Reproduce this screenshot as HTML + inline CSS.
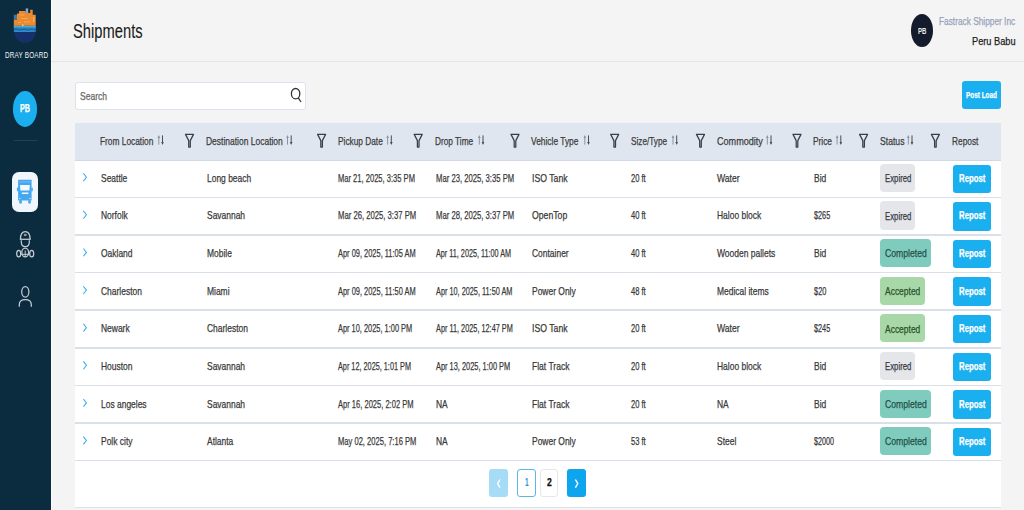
<!DOCTYPE html><html><head><meta charset="utf-8"><style>
html,body{margin:0;padding:0;}
body{width:1024px;height:510px;overflow:hidden;position:relative;background:#f4f4f4;font-family:"Liberation Sans",sans-serif;}
.t{position:absolute;white-space:nowrap;line-height:normal;transform-origin:0 0;-webkit-text-stroke:0.25px currentColor;}
.a{position:absolute;}
svg{position:absolute;overflow:visible;}
</style></head><body><div class="a" style="left:0px;top:0px;width:51px;height:510px;background:#0b2b3f;"></div>
<div class="a" style="left:51px;top:0px;width:1.2000000000000028px;height:510px;background:#fbfbfb;"></div>
<svg style="left:0;top:0" width="51" height="64" viewBox="0 0 51 64">
<path d="M14.2 31.8 H35.7 C35.7 38.2 31 42.8 24.95 42.8 C18.9 42.8 14.2 38.2 14.2 31.8 Z" fill="#15306a"/>
<rect x="13.8" y="25.6" width="22" height="6.4" fill="#2a7fbe"/>
<rect x="13.8" y="25.8" width="22" height="1.6" fill="#45aee0"/>
<path d="M14 29.6 Q16 28.6 18 29.6 T22 29.6 T26 29.6 T30 29.6 T34 29.6 T36 29.6" fill="none" stroke="#1c5e9c" stroke-width="1"/>
<path d="M14 31.2 Q16 30.4 18 31.2 T22 31.2 T26 31.2 T30 31.2 T34 31.2" fill="none" stroke="#3b9bd2" stroke-width="0.7"/>
<path d="M13.8 25.8 V19.5 H17 V13.5 H19 V11 H25.7 V13 H30.2 V9.8 H32.7 V14.7 H35.7 V25.8 Z" fill="#ec8a30"/>
<rect x="13.8" y="14.7" width="3.2" height="5" fill="#3a78ac"/>
<rect x="25.7" y="8.4" width="2.5" height="4.6" fill="#8aa6c6"/>
<g fill="#f7b872" opacity=".75"><rect x="19.5" y="14.5" width="5" height="0.9"/><rect x="21" y="18" width="7" height="0.9"/><rect x="24" y="21.5" width="6" height="0.9"/><rect x="33" y="17" width="1.5" height="5"/><rect x="18" y="22" width="3" height="0.9"/></g>
<rect x="22" y="24.6" width="1.5" height="1.2" fill="#ffe1a0"/>
</svg>
<div class="t" style="left:4.60px;top:49.23px;font-size:9.8px;color:#f2f4f6;font-weight:normal;transform:scaleX(0.6479);letter-spacing:0.3px;-webkit-text-stroke:0;">DRAY BOARD</div>
<div class="a" style="left:13px;top:91px;width:24.299999999999997px;height:35.599999999999994px;background:#1ab0ef;border-radius:50%;"></div>
<div class="t" style="left:20.20px;top:102.98px;font-size:10.3px;color:#ffffff;font-weight:bold;transform:scaleX(0.6991);">PB</div>
<div class="a" style="left:14px;top:139.5px;width:23px;height:1.0px;background:#23405a;"></div>
<div class="a" style="left:12px;top:172px;width:26.299999999999997px;height:39.599999999999994px;background:#f0f6fb;border-radius:7px;"></div>
<svg style="left:0;top:0" width="51" height="320" viewBox="0 0 51 320">
<g fill="#45a8ee">
<rect x="18.1" y="179.8" width="13.5" height="20.8" rx="0.5"/>
<rect x="16.9" y="187.4" width="1.6" height="3.9" rx="0.6"/>
<rect x="31.2" y="187.4" width="1.6" height="3.9" rx="0.6"/>
<rect x="19.2" y="200" width="2.7" height="3.7" rx="1.1"/>
<rect x="28.2" y="200" width="2.7" height="3.7" rx="1.1"/>
</g>
<g fill="#f4f9fd">
<path d="M20 185.1 H29.8 L29.4 190.4 H20.4 Z"/>
<rect x="21.9" y="192.5" width="6.5" height="1.5"/>
<rect x="19.2" y="181.6" width="11.3" height="0.6" opacity=".45"/>
<rect x="19" y="197.9" width="1.6" height="1.2" opacity=".6"/>
<rect x="29.1" y="197.9" width="1.6" height="1.2" opacity=".6"/>
</g>
<g fill="none" stroke="#c5cbd1" stroke-width="1.25">
<path d="M20.5 239 C20.5 233.6 22.5 231.6 25.3 231.6 C28.1 231.6 30 233.6 30 239"/>
<path d="M19.8 239.3 H30.8"/>
<ellipse cx="25.3" cy="234.9" rx="1.2" ry="0.7" stroke-width="0.9"/>
<path d="M21.3 240.2 V242 C21.3 245 23 246.7 25.3 246.7 C27.6 246.7 29.3 245 29.3 242 V240.2"/>
<ellipse cx="25.2" cy="252.5" rx="3.4" ry="4.4"/>
<path d="M25.2 250.5 V256.8 M20.7 254.3 H29.7" stroke-width="1"/>
<ellipse cx="18.7" cy="253.6" rx="2" ry="3.3"/>
<ellipse cx="31.7" cy="253.6" rx="2" ry="3.3"/>
<ellipse cx="25.3" cy="291.8" rx="3.6" ry="5.3"/>
<path d="M19.3 306.7 V304.5 C19.3 301 21.5 299.5 25.3 299.5 C29.1 299.5 31.3 301 31.3 304.5 V306.7"/>
</g>
</svg>
<div class="a" style="left:51px;top:61px;width:973px;height:1px;background:#e6e6e6;"></div>
<div class="t" style="left:73.10px;top:20.63px;font-size:19.3px;color:#1b1b1b;font-weight:normal;transform:scaleX(0.7640);-webkit-text-stroke:0.1px currentColor;">Shipments</div>
<div class="a" style="left:911px;top:14px;width:22px;height:33px;background:#131b2d;border-radius:50%;"></div>
<div class="t" style="left:917.80px;top:24.61px;font-size:9.6px;color:#ececec;font-weight:bold;transform:scaleX(0.6303);-webkit-text-stroke:0;">PB</div>
<div class="t" style="left:939.10px;top:14.92px;font-size:10.7px;color:#97a3ba;font-weight:normal;transform:scaleX(0.7775);">Fastrack Shipper Inc</div>
<div class="t" style="left:971.60px;top:33.60px;font-size:11.6px;color:#1c1c1c;font-weight:normal;transform:scaleX(0.7958);">Peru Babu</div>
<div class="a" style="left:74.5px;top:81.5px;width:231.5px;height:28.200000000000003px;background:#fff;border:1px solid #dde3ec;border-radius:3px;box-sizing:border-box;"></div>
<div class="t" style="left:80.30px;top:90.05px;font-size:11px;color:#666;font-weight:normal;transform:scaleX(0.7747);">Search</div>
<svg style="left:0;top:0" width="320" height="120" viewBox="0 0 320 120"><g fill="none" stroke="#333" stroke-width="1.3">
<ellipse cx="295.6" cy="93.7" rx="4.2" ry="5.2"/><path d="M298.3 97.8 L301 102"/></g></svg>
<div class="a" style="left:962px;top:81px;width:39.200000000000045px;height:28px;background:#1ab0ef;border-radius:3px;"></div>
<div class="t" style="left:966.10px;top:89.34px;font-size:9.9px;color:#ffffff;font-weight:bold;transform:scaleX(0.6495);">Post Load</div>
<div class="a" style="left:74.7px;top:122.8px;width:926.3px;height:384.2px;background:#ffffff;"></div>
<div class="a" style="left:74.7px;top:122.8px;width:926.3px;height:37.8px;background:#dfe6ef;border-bottom:1.2px solid #cfd8e4;box-sizing:border-box;"></div>
<div class="a" style="left:74.7px;top:506.5px;width:926.3px;height:1.5px;background:#dde3ea;"></div>
<div class="t" style="left:100.10px;top:134.69px;font-size:11.5px;color:#3b3b3b;font-weight:normal;transform:scaleX(0.7251);">From Location</div>
<div class="t" style="left:205.90px;top:134.69px;font-size:11.5px;color:#3b3b3b;font-weight:normal;transform:scaleX(0.7370);">Destination Location</div>
<div class="t" style="left:337.60px;top:134.69px;font-size:11.5px;color:#3b3b3b;font-weight:normal;transform:scaleX(0.7225);">Pickup Date</div>
<div class="t" style="left:435.20px;top:134.69px;font-size:11.5px;color:#3b3b3b;font-weight:normal;transform:scaleX(0.7193);">Drop Time</div>
<div class="t" style="left:531.30px;top:134.69px;font-size:11.5px;color:#3b3b3b;font-weight:normal;transform:scaleX(0.7300);">Vehicle Type</div>
<div class="t" style="left:630.80px;top:134.69px;font-size:11.5px;color:#3b3b3b;font-weight:normal;transform:scaleX(0.7129);">Size/Type</div>
<div class="t" style="left:716.70px;top:134.69px;font-size:11.5px;color:#3b3b3b;font-weight:normal;transform:scaleX(0.7893);">Commodity</div>
<div class="t" style="left:813.10px;top:134.69px;font-size:11.5px;color:#3b3b3b;font-weight:normal;transform:scaleX(0.7252);">Price</div>
<div class="t" style="left:879.60px;top:134.69px;font-size:11.5px;color:#3b3b3b;font-weight:normal;transform:scaleX(0.7515);">Status</div>
<div class="t" style="left:952.20px;top:134.69px;font-size:11.5px;color:#3b3b3b;font-weight:normal;transform:scaleX(0.7245);">Repost</div>
<svg style="left:0;top:0" width="1024" height="160" viewBox="0 0 1024 160"><g fill="none"><path d="M158.8 136.4 V144.6" stroke="#8d949e" stroke-width="1"/><path d="M157.5 138 L158.8 135 L160.1 138 Z" fill="#8d949e"/><path d="M162.5 135.4 V143.4" stroke="#4a4d55" stroke-width="1"/><path d="M161.2 142 L162.5 145 L163.8 142 Z" fill="#4a4d55"/></g><g fill="none"><path d="M287.5 136.4 V144.6" stroke="#8d949e" stroke-width="1"/><path d="M286.2 138 L287.5 135 L288.8 138 Z" fill="#8d949e"/><path d="M291.2 135.4 V143.4" stroke="#4a4d55" stroke-width="1"/><path d="M289.9 142 L291.2 145 L292.5 142 Z" fill="#4a4d55"/></g><g fill="none"><path d="M387.6 136.4 V144.6" stroke="#8d949e" stroke-width="1"/><path d="M386.3 138 L387.6 135 L388.9 138 Z" fill="#8d949e"/><path d="M391.3 135.4 V143.4" stroke="#4a4d55" stroke-width="1"/><path d="M390.0 142 L391.3 145 L392.6 142 Z" fill="#4a4d55"/></g><g fill="none"><path d="M479.3 136.4 V144.6" stroke="#8d949e" stroke-width="1"/><path d="M478.0 138 L479.3 135 L480.6 138 Z" fill="#8d949e"/><path d="M483.0 135.4 V143.4" stroke="#4a4d55" stroke-width="1"/><path d="M481.7 142 L483.0 145 L484.3 142 Z" fill="#4a4d55"/></g><g fill="none"><path d="M584.8 136.4 V144.6" stroke="#8d949e" stroke-width="1"/><path d="M583.5 138 L584.8 135 L586.1 138 Z" fill="#8d949e"/><path d="M588.5 135.4 V143.4" stroke="#4a4d55" stroke-width="1"/><path d="M587.2 142 L588.5 145 L589.8 142 Z" fill="#4a4d55"/></g><g fill="none"><path d="M673.0 136.4 V144.6" stroke="#8d949e" stroke-width="1"/><path d="M671.7 138 L673.0 135 L674.3 138 Z" fill="#8d949e"/><path d="M676.7 135.4 V143.4" stroke="#4a4d55" stroke-width="1"/><path d="M675.4 142 L676.7 145 L678.0 142 Z" fill="#4a4d55"/></g><g fill="none"><path d="M767.3 136.4 V144.6" stroke="#8d949e" stroke-width="1"/><path d="M766.0 138 L767.3 135 L768.6 138 Z" fill="#8d949e"/><path d="M771.0 135.4 V143.4" stroke="#4a4d55" stroke-width="1"/><path d="M769.7 142 L771.0 145 L772.3 142 Z" fill="#4a4d55"/></g><g fill="none"><path d="M837.1 136.4 V144.6" stroke="#8d949e" stroke-width="1"/><path d="M835.8 138 L837.1 135 L838.4 138 Z" fill="#8d949e"/><path d="M840.8 135.4 V143.4" stroke="#4a4d55" stroke-width="1"/><path d="M839.5 142 L840.8 145 L842.1 142 Z" fill="#4a4d55"/></g><g fill="none"><path d="M908.3 136.4 V144.6" stroke="#8d949e" stroke-width="1"/><path d="M907.0 138 L908.3 135 L909.6 138 Z" fill="#8d949e"/><path d="M912.0 135.4 V143.4" stroke="#4a4d55" stroke-width="1"/><path d="M910.7 142 L912.0 145 L913.3 142 Z" fill="#4a4d55"/></g><path d="M185.5 134.4 H193.5 L190.3 140.6 V147.1 H188.7 V140.6 Z" fill="none" stroke="#3b3e46" stroke-width="1.25" stroke-linejoin="round"/><path d="M317.6 134.4 H325.6 L322.4 140.6 V147.1 H320.8 V140.6 Z" fill="none" stroke="#3b3e46" stroke-width="1.25" stroke-linejoin="round"/><path d="M414.2 134.4 H422.2 L419.0 140.6 V147.1 H417.4 V140.6 Z" fill="none" stroke="#3b3e46" stroke-width="1.25" stroke-linejoin="round"/><path d="M511.0 134.4 H519.0 L515.8 140.6 V147.1 H514.2 V140.6 Z" fill="none" stroke="#3b3e46" stroke-width="1.25" stroke-linejoin="round"/><path d="M610.7 134.4 H618.7 L615.5 140.6 V147.1 H613.9 V140.6 Z" fill="none" stroke="#3b3e46" stroke-width="1.25" stroke-linejoin="round"/><path d="M696.5 134.4 H704.5 L701.3 140.6 V147.1 H699.7 V140.6 Z" fill="none" stroke="#3b3e46" stroke-width="1.25" stroke-linejoin="round"/><path d="M793.0 134.4 H801.0 L797.8 140.6 V147.1 H796.2 V140.6 Z" fill="none" stroke="#3b3e46" stroke-width="1.25" stroke-linejoin="round"/><path d="M859.6 134.4 H867.6 L864.4 140.6 V147.1 H862.8 V140.6 Z" fill="none" stroke="#3b3e46" stroke-width="1.25" stroke-linejoin="round"/><path d="M931.4 134.4 H939.4 L936.2 140.6 V147.1 H934.6 V140.6 Z" fill="none" stroke="#3b3e46" stroke-width="1.25" stroke-linejoin="round"/></svg>
<div class="a" style="left:74.7px;top:196.5px;width:926.3px;height:1.5999999999999943px;background:#d9e0ea;"></div>
<div class="t" style="left:100.70px;top:171.79px;font-size:11.5px;color:#383838;font-weight:normal;transform:scaleX(0.7350);">Seattle</div>
<div class="t" style="left:206.50px;top:171.79px;font-size:11.5px;color:#383838;font-weight:normal;transform:scaleX(0.7350);">Long beach</div>
<div class="t" style="left:338.20px;top:171.79px;font-size:11.5px;color:#383838;font-weight:normal;transform:scaleX(0.6576);">Mar 21, 2025, 3:35 PM</div>
<div class="t" style="left:435.80px;top:171.79px;font-size:11.5px;color:#383838;font-weight:normal;transform:scaleX(0.6686);">Mar 23, 2025, 3:35 PM</div>
<div class="t" style="left:531.90px;top:171.79px;font-size:11.5px;color:#383838;font-weight:normal;transform:scaleX(0.7548);">ISO Tank</div>
<div class="t" style="left:631.40px;top:171.79px;font-size:11.5px;color:#383838;font-weight:normal;transform:scaleX(0.6578);">20 ft</div>
<div class="t" style="left:717.30px;top:171.79px;font-size:11.5px;color:#383838;font-weight:normal;transform:scaleX(0.7454);">Water</div>
<div class="t" style="left:813.70px;top:171.79px;font-size:11.5px;color:#383838;font-weight:normal;transform:scaleX(0.7350);">Bid</div>
<div class="a" style="left:880.4px;top:163.8px;width:35.0px;height:28.19999999999999px;background:#e5e6ea;border-radius:4px;"></div>
<div class="t" style="left:884.60px;top:172.12px;font-size:10.7px;color:#353a42;font-weight:normal;transform:scaleX(0.7285);">Expired</div>
<div class="a" style="left:953.1px;top:164.6px;width:38.10000000000002px;height:28.400000000000006px;background:#1ab0ef;border-radius:3px;"></div>
<div class="t" style="left:958.90px;top:171.82px;font-size:10.7px;color:#ffffff;font-weight:bold;transform:scaleX(0.7288);">Repost</div>
<div class="a" style="left:74.7px;top:234.12px;width:926.3px;height:1.5999999999999943px;background:#d9e0ea;"></div>
<div class="t" style="left:100.70px;top:209.41px;font-size:11.5px;color:#383838;font-weight:normal;transform:scaleX(0.7350);">Norfolk</div>
<div class="t" style="left:206.50px;top:209.41px;font-size:11.5px;color:#383838;font-weight:normal;transform:scaleX(0.7350);">Savannah</div>
<div class="t" style="left:338.20px;top:209.41px;font-size:11.5px;color:#383838;font-weight:normal;transform:scaleX(0.6686);">Mar 26, 2025, 3:37 PM</div>
<div class="t" style="left:435.80px;top:209.41px;font-size:11.5px;color:#383838;font-weight:normal;transform:scaleX(0.6686);">Mar 28, 2025, 3:37 PM</div>
<div class="t" style="left:531.90px;top:209.41px;font-size:11.5px;color:#383838;font-weight:normal;transform:scaleX(0.7551);">OpenTop</div>
<div class="t" style="left:631.40px;top:209.41px;font-size:11.5px;color:#383838;font-weight:normal;transform:scaleX(0.6578);">40 ft</div>
<div class="t" style="left:717.30px;top:209.41px;font-size:11.5px;color:#383838;font-weight:normal;transform:scaleX(0.7350);">Haloo block</div>
<div class="t" style="left:813.70px;top:209.41px;font-size:11.5px;color:#383838;font-weight:normal;transform:scaleX(0.6337);">$265</div>
<div class="a" style="left:880.4px;top:201.42px;width:35.0px;height:28.200000000000017px;background:#e5e6ea;border-radius:4px;"></div>
<div class="t" style="left:884.60px;top:209.74px;font-size:10.7px;color:#353a42;font-weight:normal;transform:scaleX(0.7285);">Expired</div>
<div class="a" style="left:953.1px;top:202.22px;width:38.10000000000002px;height:28.400000000000006px;background:#1ab0ef;border-radius:3px;"></div>
<div class="t" style="left:958.90px;top:209.44px;font-size:10.7px;color:#ffffff;font-weight:bold;transform:scaleX(0.7288);">Repost</div>
<div class="a" style="left:74.7px;top:271.74px;width:926.3px;height:1.599999999999966px;background:#d9e0ea;"></div>
<div class="t" style="left:100.70px;top:247.03px;font-size:11.5px;color:#383838;font-weight:normal;transform:scaleX(0.7350);">Oakland</div>
<div class="t" style="left:206.50px;top:247.03px;font-size:11.5px;color:#383838;font-weight:normal;transform:scaleX(0.7350);">Mobile</div>
<div class="t" style="left:338.20px;top:247.03px;font-size:11.5px;color:#383838;font-weight:normal;transform:scaleX(0.6474);">Apr 09, 2025, 11:05 AM</div>
<div class="t" style="left:435.80px;top:247.03px;font-size:11.5px;color:#383838;font-weight:normal;transform:scaleX(0.6307);">Apr 11, 2025, 11:00 AM</div>
<div class="t" style="left:531.90px;top:247.03px;font-size:11.5px;color:#383838;font-weight:normal;transform:scaleX(0.7350);">Container</div>
<div class="t" style="left:631.40px;top:247.03px;font-size:11.5px;color:#383838;font-weight:normal;transform:scaleX(0.6578);">40 ft</div>
<div class="t" style="left:717.30px;top:247.03px;font-size:11.5px;color:#383838;font-weight:normal;transform:scaleX(0.7369);">Wooden pallets</div>
<div class="t" style="left:813.70px;top:247.03px;font-size:11.5px;color:#383838;font-weight:normal;transform:scaleX(0.7350);">Bid</div>
<div class="a" style="left:880.4px;top:239.04px;width:50.700000000000045px;height:28.200000000000017px;background:#7fcbbd;border-radius:4px;"></div>
<div class="t" style="left:884.60px;top:247.36px;font-size:10.7px;color:#1f4f47;font-weight:normal;transform:scaleX(0.8088);">Completed</div>
<div class="a" style="left:953.1px;top:239.84px;width:38.10000000000002px;height:28.400000000000006px;background:#1ab0ef;border-radius:3px;"></div>
<div class="t" style="left:958.90px;top:247.06px;font-size:10.7px;color:#ffffff;font-weight:bold;transform:scaleX(0.7288);">Repost</div>
<div class="a" style="left:74.7px;top:309.36px;width:926.3px;height:1.599999999999966px;background:#d9e0ea;"></div>
<div class="t" style="left:100.70px;top:284.65px;font-size:11.5px;color:#383838;font-weight:normal;transform:scaleX(0.7350);">Charleston</div>
<div class="t" style="left:206.50px;top:284.65px;font-size:11.5px;color:#383838;font-weight:normal;transform:scaleX(0.7350);">Miami</div>
<div class="t" style="left:338.20px;top:284.65px;font-size:11.5px;color:#383838;font-weight:normal;transform:scaleX(0.6474);">Apr 09, 2025, 11:50 AM</div>
<div class="t" style="left:435.80px;top:284.65px;font-size:11.5px;color:#383838;font-weight:normal;transform:scaleX(0.6368);">Apr 10, 2025, 11:50 AM</div>
<div class="t" style="left:531.90px;top:284.65px;font-size:11.5px;color:#383838;font-weight:normal;transform:scaleX(0.7350);">Power Only</div>
<div class="t" style="left:631.40px;top:284.65px;font-size:11.5px;color:#383838;font-weight:normal;transform:scaleX(0.6578);">48 ft</div>
<div class="t" style="left:717.30px;top:284.65px;font-size:11.5px;color:#383838;font-weight:normal;transform:scaleX(0.7350);">Medical items</div>
<div class="t" style="left:813.70px;top:284.65px;font-size:11.5px;color:#383838;font-weight:normal;transform:scaleX(0.6450);">$20</div>
<div class="a" style="left:880.4px;top:276.66px;width:44.5px;height:28.19999999999999px;background:#a8d8a7;border-radius:4px;"></div>
<div class="t" style="left:884.60px;top:284.98px;font-size:10.7px;color:#2a532b;font-weight:normal;transform:scaleX(0.7922);">Accepted</div>
<div class="a" style="left:953.1px;top:277.46px;width:38.10000000000002px;height:28.400000000000034px;background:#1ab0ef;border-radius:3px;"></div>
<div class="t" style="left:958.90px;top:284.68px;font-size:10.7px;color:#ffffff;font-weight:bold;transform:scaleX(0.7288);">Repost</div>
<div class="a" style="left:74.7px;top:346.98px;width:926.3px;height:1.599999999999966px;background:#d9e0ea;"></div>
<div class="t" style="left:100.70px;top:322.27px;font-size:11.5px;color:#383838;font-weight:normal;transform:scaleX(0.7350);">Newark</div>
<div class="t" style="left:206.50px;top:322.27px;font-size:11.5px;color:#383838;font-weight:normal;transform:scaleX(0.7350);">Charleston</div>
<div class="t" style="left:338.20px;top:322.27px;font-size:11.5px;color:#383838;font-weight:normal;transform:scaleX(0.6452);">Apr 10, 2025, 1:00 PM</div>
<div class="t" style="left:435.80px;top:322.27px;font-size:11.5px;color:#383838;font-weight:normal;transform:scaleX(0.6368);">Apr 11, 2025, 12:47 PM</div>
<div class="t" style="left:531.90px;top:322.27px;font-size:11.5px;color:#383838;font-weight:normal;transform:scaleX(0.7548);">ISO Tank</div>
<div class="t" style="left:631.40px;top:322.27px;font-size:11.5px;color:#383838;font-weight:normal;transform:scaleX(0.6578);">20 ft</div>
<div class="t" style="left:717.30px;top:322.27px;font-size:11.5px;color:#383838;font-weight:normal;transform:scaleX(0.7454);">Water</div>
<div class="t" style="left:813.70px;top:322.27px;font-size:11.5px;color:#383838;font-weight:normal;transform:scaleX(0.6337);">$245</div>
<div class="a" style="left:880.4px;top:314.28px;width:44.5px;height:28.200000000000045px;background:#a8d8a7;border-radius:4px;"></div>
<div class="t" style="left:884.60px;top:322.60px;font-size:10.7px;color:#2a532b;font-weight:normal;transform:scaleX(0.7922);">Accepted</div>
<div class="a" style="left:953.1px;top:315.08px;width:38.10000000000002px;height:28.400000000000034px;background:#1ab0ef;border-radius:3px;"></div>
<div class="t" style="left:958.90px;top:322.30px;font-size:10.7px;color:#ffffff;font-weight:bold;transform:scaleX(0.7288);">Repost</div>
<div class="a" style="left:74.7px;top:384.6px;width:926.3px;height:1.599999999999966px;background:#d9e0ea;"></div>
<div class="t" style="left:100.70px;top:359.89px;font-size:11.5px;color:#383838;font-weight:normal;transform:scaleX(0.7350);">Houston</div>
<div class="t" style="left:206.50px;top:359.89px;font-size:11.5px;color:#383838;font-weight:normal;transform:scaleX(0.7350);">Savannah</div>
<div class="t" style="left:338.20px;top:359.89px;font-size:11.5px;color:#383838;font-weight:normal;transform:scaleX(0.6341);">Apr 12, 2025, 1:01 PM</div>
<div class="t" style="left:435.80px;top:359.89px;font-size:11.5px;color:#383838;font-weight:normal;transform:scaleX(0.6452);">Apr 13, 2025, 1:00 PM</div>
<div class="t" style="left:531.90px;top:359.89px;font-size:11.5px;color:#383838;font-weight:normal;transform:scaleX(0.7412);">Flat Track</div>
<div class="t" style="left:631.40px;top:359.89px;font-size:11.5px;color:#383838;font-weight:normal;transform:scaleX(0.6578);">20 ft</div>
<div class="t" style="left:717.30px;top:359.89px;font-size:11.5px;color:#383838;font-weight:normal;transform:scaleX(0.7350);">Haloo block</div>
<div class="t" style="left:813.70px;top:359.89px;font-size:11.5px;color:#383838;font-weight:normal;transform:scaleX(0.7350);">Bid</div>
<div class="a" style="left:880.4px;top:351.9px;width:35.0px;height:28.200000000000045px;background:#e5e6ea;border-radius:4px;"></div>
<div class="t" style="left:884.60px;top:360.22px;font-size:10.7px;color:#353a42;font-weight:normal;transform:scaleX(0.7285);">Expired</div>
<div class="a" style="left:953.1px;top:352.7px;width:38.10000000000002px;height:28.400000000000034px;background:#1ab0ef;border-radius:3px;"></div>
<div class="t" style="left:958.90px;top:359.92px;font-size:10.7px;color:#ffffff;font-weight:bold;transform:scaleX(0.7288);">Repost</div>
<div class="a" style="left:74.7px;top:422.22px;width:926.3px;height:1.599999999999966px;background:#d9e0ea;"></div>
<div class="t" style="left:100.70px;top:397.51px;font-size:11.5px;color:#383838;font-weight:normal;transform:scaleX(0.7350);">Los angeles</div>
<div class="t" style="left:206.50px;top:397.51px;font-size:11.5px;color:#383838;font-weight:normal;transform:scaleX(0.7350);">Savannah</div>
<div class="t" style="left:338.20px;top:397.51px;font-size:11.5px;color:#383838;font-weight:normal;transform:scaleX(0.6564);">Apr 16, 2025, 2:02 PM</div>
<div class="t" style="left:435.80px;top:397.51px;font-size:11.5px;color:#383838;font-weight:normal;transform:scaleX(0.7350);">NA</div>
<div class="t" style="left:531.90px;top:397.51px;font-size:11.5px;color:#383838;font-weight:normal;transform:scaleX(0.7412);">Flat Track</div>
<div class="t" style="left:631.40px;top:397.51px;font-size:11.5px;color:#383838;font-weight:normal;transform:scaleX(0.6578);">20 ft</div>
<div class="t" style="left:717.30px;top:397.51px;font-size:11.5px;color:#383838;font-weight:normal;transform:scaleX(0.7350);">NA</div>
<div class="t" style="left:813.70px;top:397.51px;font-size:11.5px;color:#383838;font-weight:normal;transform:scaleX(0.7350);">Bid</div>
<div class="a" style="left:880.4px;top:389.52px;width:50.700000000000045px;height:28.200000000000045px;background:#7fcbbd;border-radius:4px;"></div>
<div class="t" style="left:884.60px;top:397.84px;font-size:10.7px;color:#1f4f47;font-weight:normal;transform:scaleX(0.8088);">Completed</div>
<div class="a" style="left:953.1px;top:390.32px;width:38.10000000000002px;height:28.400000000000034px;background:#1ab0ef;border-radius:3px;"></div>
<div class="t" style="left:958.90px;top:397.54px;font-size:10.7px;color:#ffffff;font-weight:bold;transform:scaleX(0.7288);">Repost</div>
<div class="a" style="left:74.7px;top:459.84px;width:926.3px;height:1.6000000000000227px;background:#d9e0ea;"></div>
<div class="t" style="left:100.70px;top:435.13px;font-size:11.5px;color:#383838;font-weight:normal;transform:scaleX(0.7350);">Polk city</div>
<div class="t" style="left:206.50px;top:435.13px;font-size:11.5px;color:#383838;font-weight:normal;transform:scaleX(0.7350);">Atlanta</div>
<div class="t" style="left:338.20px;top:435.13px;font-size:11.5px;color:#383838;font-weight:normal;transform:scaleX(0.6589);">May 02, 2025, 7:16 PM</div>
<div class="t" style="left:435.80px;top:435.13px;font-size:11.5px;color:#383838;font-weight:normal;transform:scaleX(0.7350);">NA</div>
<div class="t" style="left:531.90px;top:435.13px;font-size:11.5px;color:#383838;font-weight:normal;transform:scaleX(0.7350);">Power Only</div>
<div class="t" style="left:631.40px;top:435.13px;font-size:11.5px;color:#383838;font-weight:normal;transform:scaleX(0.6578);">53 ft</div>
<div class="t" style="left:717.30px;top:435.13px;font-size:11.5px;color:#383838;font-weight:normal;transform:scaleX(0.7350);">Steel</div>
<div class="t" style="left:813.70px;top:435.13px;font-size:11.5px;color:#383838;font-weight:normal;transform:scaleX(0.6270);">$2000</div>
<div class="a" style="left:880.4px;top:427.14px;width:50.700000000000045px;height:28.19999999999999px;background:#7fcbbd;border-radius:4px;"></div>
<div class="t" style="left:884.60px;top:435.46px;font-size:10.7px;color:#1f4f47;font-weight:normal;transform:scaleX(0.8088);">Completed</div>
<div class="a" style="left:953.1px;top:427.94px;width:38.10000000000002px;height:28.399999999999977px;background:#1ab0ef;border-radius:3px;"></div>
<div class="t" style="left:958.90px;top:435.16px;font-size:10.7px;color:#ffffff;font-weight:bold;transform:scaleX(0.7288);">Repost</div>
<svg style="left:0;top:0" width="100" height="510" viewBox="0 0 100 510"><path d="M83.4 173.3 L86.4 177.2 L83.4 181.1" fill="none" stroke="#35acec" stroke-width="1.05"/><path d="M83.4 210.9 L86.4 214.8 L83.4 218.7" fill="none" stroke="#35acec" stroke-width="1.05"/><path d="M83.4 248.5 L86.4 252.4 L83.4 256.3" fill="none" stroke="#35acec" stroke-width="1.05"/><path d="M83.4 286.2 L86.4 290.1 L83.4 294.0" fill="none" stroke="#35acec" stroke-width="1.05"/><path d="M83.4 323.8 L86.4 327.7 L83.4 331.6" fill="none" stroke="#35acec" stroke-width="1.05"/><path d="M83.4 361.4 L86.4 365.3 L83.4 369.2" fill="none" stroke="#35acec" stroke-width="1.05"/><path d="M83.4 399.0 L86.4 402.9 L83.4 406.8" fill="none" stroke="#35acec" stroke-width="1.05"/><path d="M83.4 436.6 L86.4 440.5 L83.4 444.4" fill="none" stroke="#35acec" stroke-width="1.05"/></svg>
<div class="a" style="left:489.2px;top:469.2px;width:19.0px;height:28.100000000000023px;background:#a6dcf6;border-radius:3px;"></div>
<div class="a" style="left:517px;top:469.2px;width:19px;height:28.100000000000023px;background:#fff;border:1px solid #5ab6ec;border-radius:3px;box-sizing:border-box;"></div>
<div class="a" style="left:540.3px;top:469.2px;width:18.200000000000045px;height:28.100000000000023px;background:#fff;border:1px solid #e4e7eb;border-radius:3px;box-sizing:border-box;"></div>
<div class="a" style="left:567.3px;top:469.2px;width:19.0px;height:28.100000000000023px;background:#0ca5ee;border-radius:3px;"></div>
<svg style="left:0;top:0" width="1024" height="510" viewBox="0 0 1024 510"><g fill="none" stroke="#fff" stroke-width="1.4">
<path d="M500 479.5 L497.6 483.6 L500 487.7"/><path d="M575.4 479.5 L577.8 483.6 L575.4 487.7"/></g></svg>
<div class="t" style="left:524.90px;top:476.88px;font-size:10.3px;color:#2b90d4;font-weight:bold;transform:scaleX(0.6286);-webkit-text-stroke:0;">1</div>
<div class="t" style="left:547.10px;top:476.88px;font-size:10.3px;color:#111;font-weight:bold;transform:scaleX(0.8382);">2</div></body></html>
